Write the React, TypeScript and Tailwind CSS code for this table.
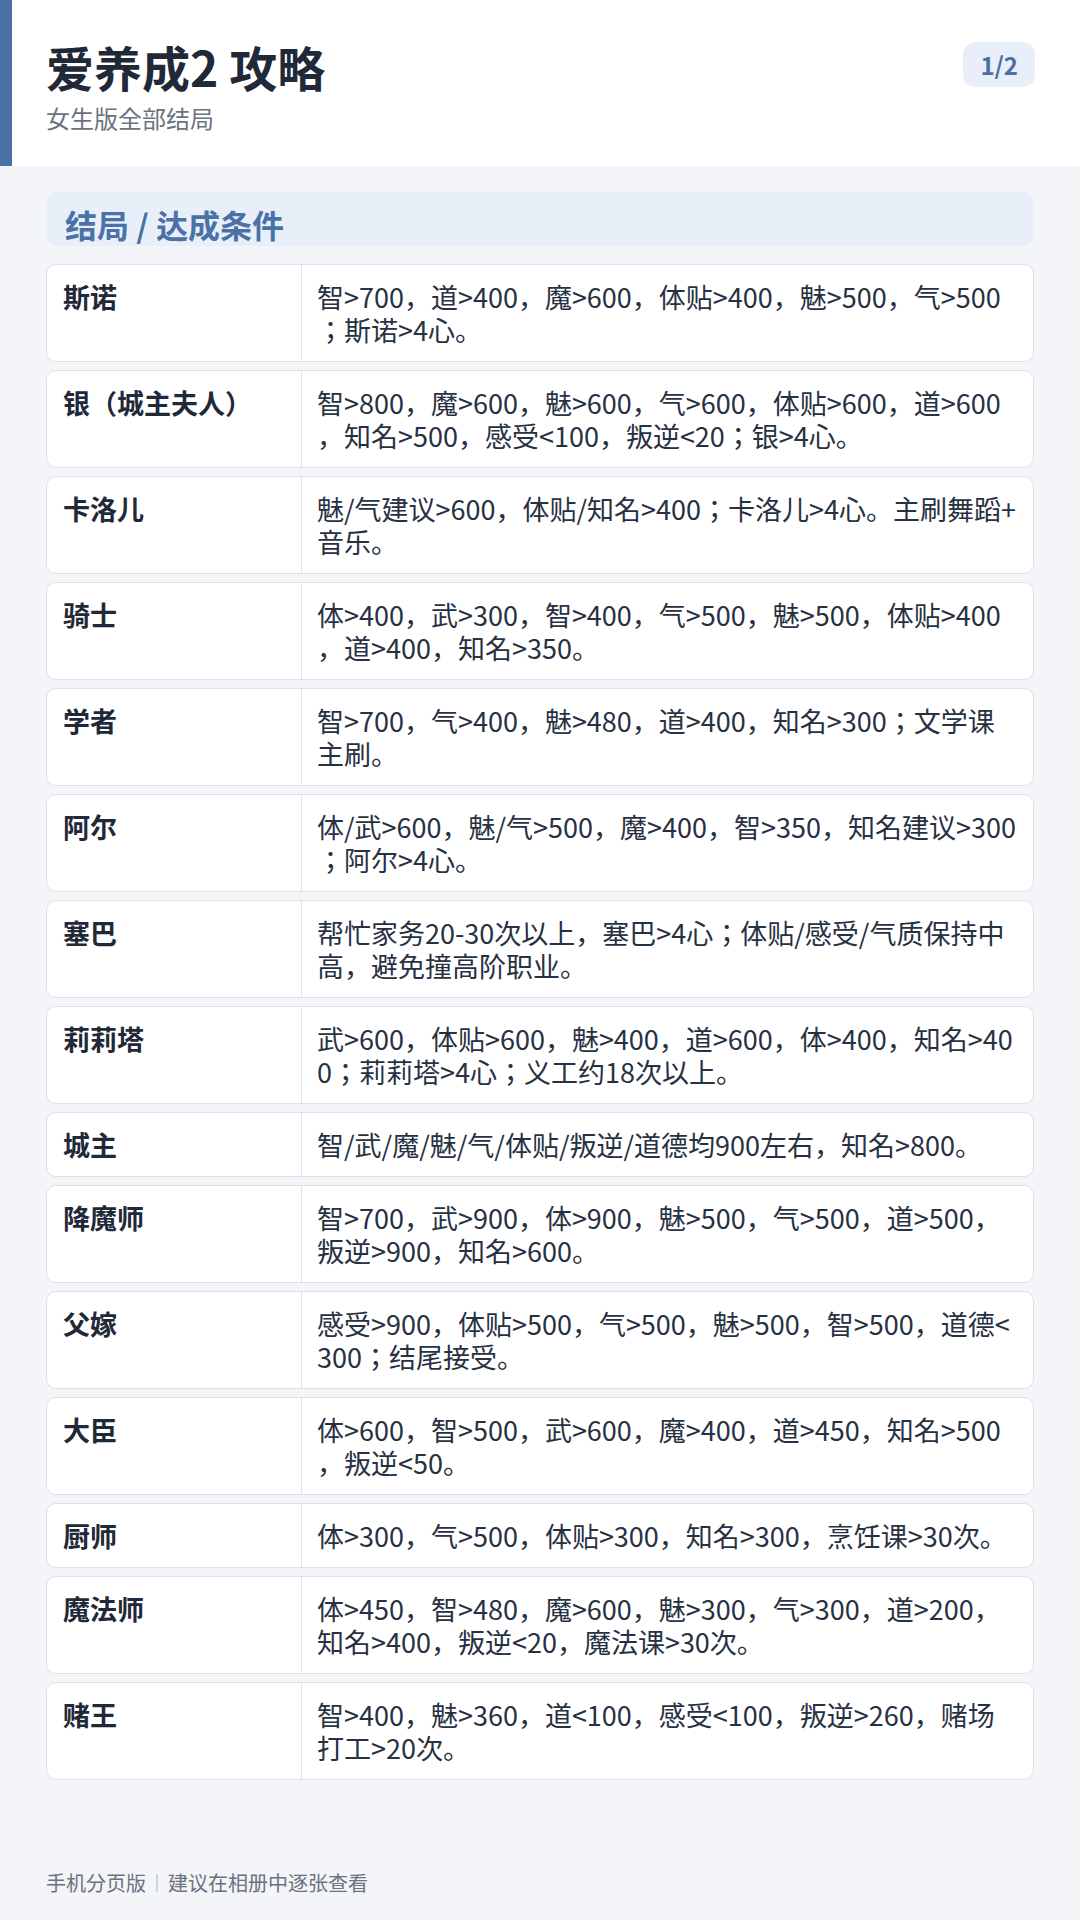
import React from 'react';

const endings = [
  { name: '斯诺', cond: '智>700，道>400，魔>600，体贴>400，魅>500，气>500；斯诺>4心。' },
  { name: '银（城主夫人）', cond: '智>800，魔>600，魅>600，气>600，体贴>600，道>600，知名>500，感受<100，叛逆<20；银>4心。' },
  { name: '卡洛儿', cond: '魅/气建议>600，体贴/知名>400；卡洛儿>4心。主刷舞蹈+音乐。' },
  { name: '骑士', cond: '体>400，武>300，智>400，气>500，魅>500，体贴>400，道>400，知名>350。' },
  { name: '学者', cond: '智>700，气>400，魅>480，道>400，知名>300；文学课主刷。' },
  { name: '阿尔', cond: '体/武>600，魅/气>500，魔>400，智>350，知名建议>300；阿尔>4心。' },
  { name: '塞巴', cond: '帮忙家务20-30次以上，塞巴>4心；体贴/感受/气质保持中高，避免撞高阶职业。' },
  { name: '莉莉塔', cond: '武>600，体贴>600，魅>400，道>600，体>400，知名>400；莉莉塔>4心；义工约18次以上。' },
  { name: '城主', cond: '智/武/魔/魅/气/体贴/叛逆/道德均900左右，知名>800。' },
  { name: '降魔师', cond: '智>700，武>900，体>900，魅>500，气>500，道>500，叛逆>900，知名>600。' },
  { name: '父嫁', cond: '感受>900，体贴>500，气>500，魅>500，智>500，道德<300；结尾接受。' },
  { name: '大臣', cond: '体>600，智>500，武>600，魔>400，道>450，知名>500，叛逆<50。' },
  { name: '厨师', cond: '体>300，气>500，体贴>300，知名>300，烹饪课>30次。' },
  { name: '魔法师', cond: '体>450，智>480，魔>600，魅>300，气>300，道>200，知名>400，叛逆<20，魔法课>30次。' },
  { name: '赌王', cond: '智>400，魅>360，道<100，感受<100，叛逆>260，赌场打工>20次。' },
];

export default function App() {
  return (
    <div className="flex min-h-[1920px] w-[1080px] flex-col bg-[#f3f5f8] font-['Noto_Sans_CJK_JP','Noto_Sans_CJK_SC',sans-serif]">
      <header className="flex h-[166px] items-start justify-between border-l-[12px] border-[#4a70a6] bg-white pl-[34px] pr-[45px]">
        <div className="pt-[38px]">
          <h1 className="text-[48px] font-bold leading-[56px] text-[#1f2937]">爱养成2 攻略</h1>
          <p className="mt-[8px] text-[24px] leading-[32px] text-[#6b7280]">女生版全部结局</p>
        </div>
        <div className="mt-[42px] flex h-[45px] items-center rounded-[12px] bg-[#e9eff8] px-[17px] text-[24px] font-bold text-[#4a6fa5]">
          1/2
        </div>
      </header>

      <main className="px-[46px] pt-[26px]">
        <div className="h-[54px] rounded-[12px] bg-[#e8eff8] pl-[19px] pt-[16px]">
          <h2 className="text-[32px] font-bold leading-none text-[#4a72a8]">结局 / 达成条件</h2>
        </div>

        <div className="mt-[18px] flex flex-col gap-[8px]">
          {endings.map((e) => (
            <div key={e.name} className="flex rounded-[10px] border border-[#dce1e8] bg-white">
              <div className="w-[255px] shrink-0 border-r border-[#dce1e8] py-[15px] pl-[16px] pr-[12px] text-[27px] font-bold leading-[33px] text-[#1f2937]">
                {e.name}
              </div>
              <div className="min-w-0 flex-1 break-all px-[15px] py-[15px] text-[27px] leading-[33px] text-[#273142] [line-break:anywhere]">
                {e.cond}
              </div>
            </div>
          ))}
        </div>
      </main>

      <footer className="mt-auto flex items-center px-[46px] pb-[23px] text-[20px] leading-[28px] text-[#6b7280]">
        手机分页版
        <span className="mx-[10px] inline-block h-[18px] w-[2px] bg-[#d1d5db]" />
        建议在相册中逐张查看
      </footer>
    </div>
  );
}
